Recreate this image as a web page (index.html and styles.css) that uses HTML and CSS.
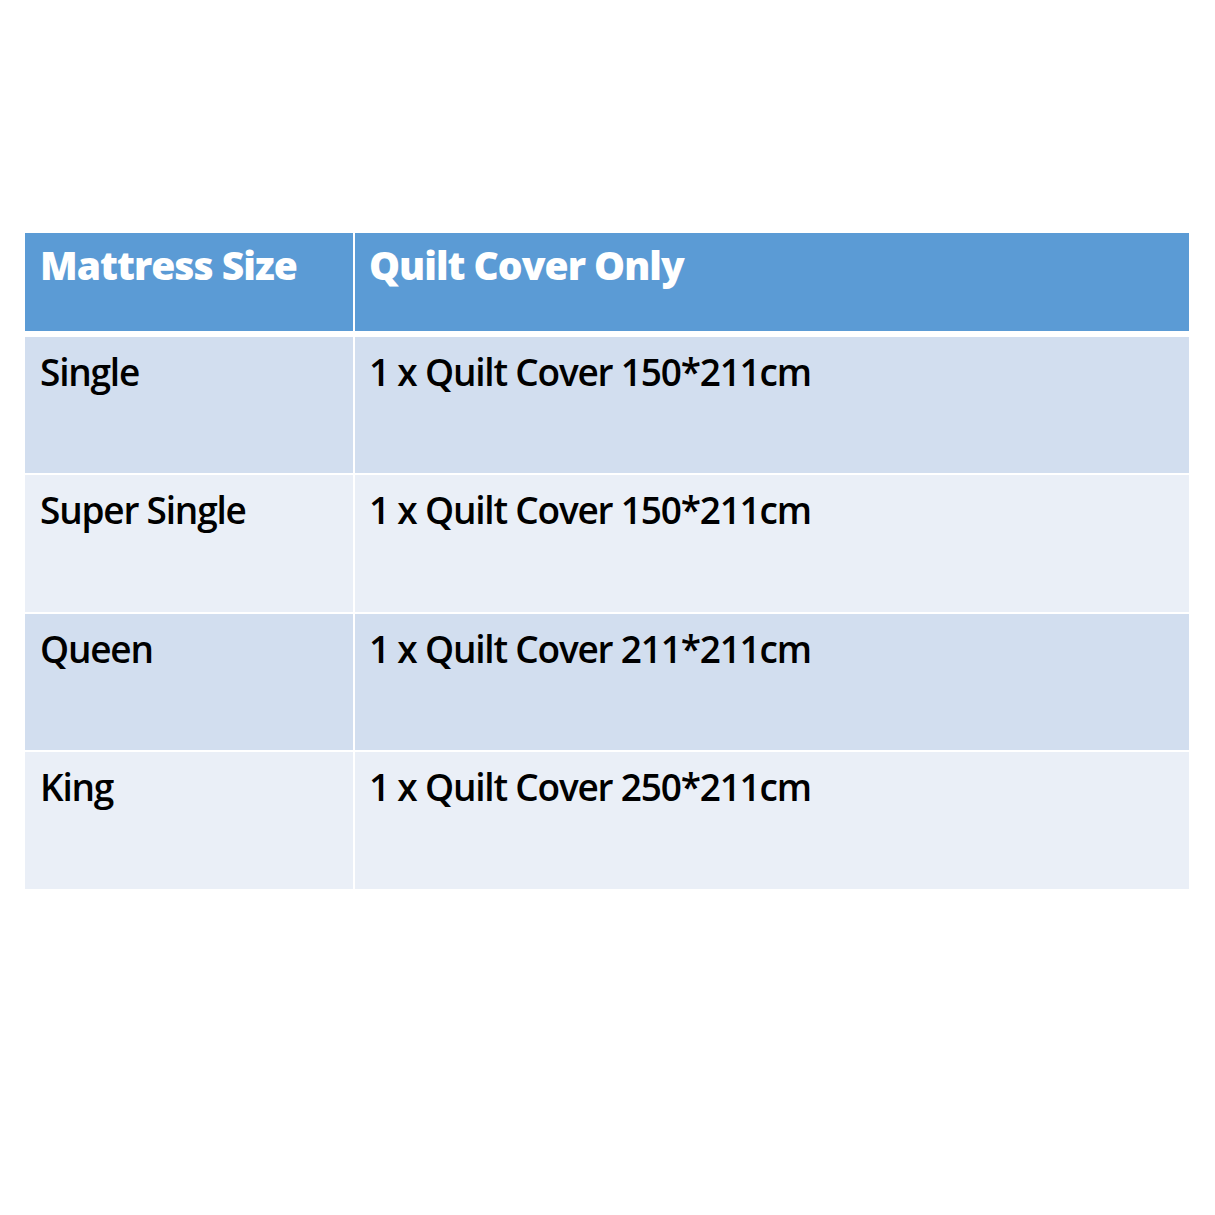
FILE: index.html
```html
<!DOCTYPE html>
<html>
<head>
<meta charset="utf-8">
<link rel="stylesheet" href="styles.css">
</head>
<body>
<div class="page">
  <div class="table">
    <div class="row head">
      <div class="cell c1">Mattress Size</div>
      <div class="cell c2">Quilt Cover Only</div>
    </div>
    <div class="row odd">
      <div class="cell c1">Single</div>
      <div class="cell c2">1 x Quilt Cover 150*211cm</div>
    </div>
    <div class="row even tall">
      <div class="cell c1">Super Single</div>
      <div class="cell c2">1 x Quilt Cover 150*211cm</div>
    </div>
    <div class="row odd">
      <div class="cell c1">Queen</div>
      <div class="cell c2">1 x Quilt Cover 211*211cm</div>
    </div>
    <div class="row even tall">
      <div class="cell c1">King</div>
      <div class="cell c2">1 x Quilt Cover 250*211cm</div>
    </div>
  </div>
</div>
</body>
</html>
```
FILE: styles.css
```css
html, body {
  margin: 0;
  padding: 0;
  background: #ffffff;
}
.page {
  width: 1215px;
  height: 1215px;
  padding: 233px 26px 0 25px;
  box-sizing: border-box;
  font-family: "Open Sans", "DejaVu Sans", sans-serif;
}
.table {
  display: flex;
  flex-direction: column;
  gap: 2px;
}
.row {
  display: grid;
  grid-template-columns: 328px 1fr;
  column-gap: 2px;
  height: 136px;
}
.row.tall {
  height: 137px;
}
.row.head {
  height: 98px;
  margin-bottom: 4px;
}
.cell {
  padding: 11px 0 0 15px;
  font-size: 37px;
  font-weight: 600;
  line-height: 48px;
  color: #000;
  letter-spacing: -1.2px;
}
.c2 {
  padding-left: 14px;
}
.head .cell {
  background: #5b9bd5;
  color: #fff;
  font-weight: 800;
  font-size: 39px;
  letter-spacing: -1px;
  padding-top: 8px;
}
.odd .cell {
  background: #d2deef;
}
.even .cell {
  background: #eaeff7;
}
```
